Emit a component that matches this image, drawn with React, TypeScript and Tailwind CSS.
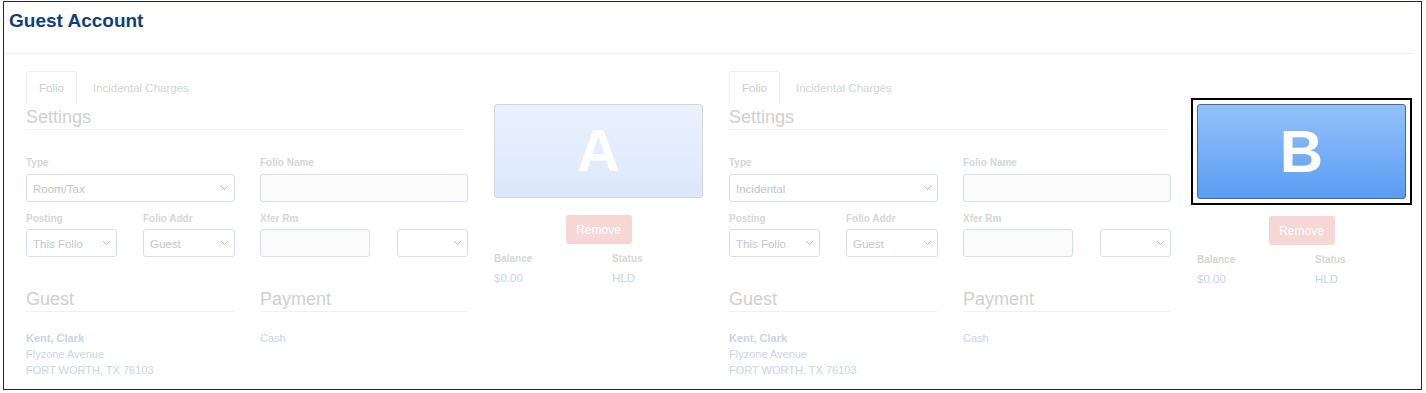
const font = { fontFamily: '"Liberation Sans", Arial, sans-serif' };

function Chevron() {
  return (
    <svg width="9" height="6" viewBox="0 0 9 6" fill="none" className="shrink-0">
      <path d="M1 1l3.5 3.5L8 1" stroke="#b8bcc2" strokeWidth="1" />
    </svg>
  );
}

function Select({ value, className }: { value?: string; className: string }) {
  return (
    <div
      className={`flex h-[28px] items-center justify-between rounded-[3px] border border-[#d3dff0] bg-white pl-[6px] pr-[5px] text-[11.5px] text-[#c4c6ca] ${className}`}
    >
      <span className="pt-[3px]">{value}</span>
      <Chevron />
    </div>
  );
}

function Input({ className }: { className: string }) {
  return <div className={`h-[28px] rounded-[3px] border border-[#d3dff0] bg-[#fbfbfc] ${className}`} />;
}

function Label({ children }: { children: React.ReactNode }) {
  return <div className="h-[12px] text-[10px] leading-[12px] font-bold text-[#d6d6d6]">{children}</div>;
}

function Folio({ type, letter, selected }: { type: string; letter: string; selected?: boolean }) {
  return (
    <div className="flex">
      <div className="w-[442px]">
        <div className="flex h-[35px] items-start">
          <div className="flex h-[33px] items-center rounded-t-[3px] border border-b-0 border-[#eeeeee] px-[12px] pt-[2px] text-[11.5px] text-[#cdcdcd]">
            Folio
          </div>
          <div className="ml-[4px] flex h-[33px] items-center px-[12px] pt-[2px] text-[11.5px] text-[#d4d4d4]">
            Incidental Charges
          </div>
        </div>
        <div className="mr-[3px] h-[24px] border-b border-[#f1f1f1] text-[18px] leading-[22px] text-[#d0d0d0]">
          Settings
        </div>

        <div className="mt-[27px] flex gap-[25px]">
          <div className="w-[209px]">
            <Label>Type</Label>
            <Select value={type} className="mt-[5px] w-full" />
          </div>
          <div className="w-[208px]">
            <Label>Folio Name</Label>
            <Input className="mt-[5px] w-full" />
          </div>
        </div>

        <div className="mt-[11px] flex">
          <div className="w-[91px]">
            <Label>Posting</Label>
            <Select value="This Folio" className="mt-[4px] w-full" />
          </div>
          <div className="ml-[26px] w-[92px]">
            <Label>Folio Addr</Label>
            <Select value="Guest" className="mt-[4px] w-full" />
          </div>
          <div className="ml-[25px] w-[110px]">
            <Label>Xfer Rm</Label>
            <Input className="mt-[4px] w-full" />
          </div>
          <div className="ml-[27px] w-[71px] pt-[16px]">
            <Select className="w-full" />
          </div>
        </div>

        <div className="mt-[31px] flex gap-[26px]">
          <div className="w-[208px]">
            <div className="h-[24px] border-b border-[#f1f1f1] text-[18px] leading-[22px] text-[#d0d0d0]">Guest</div>
            <div className="mt-[18px] text-[11px] leading-[16px] text-[#c9d5e7]">
              <div className="font-bold">Kent, Clark</div>
              <div>Flyzone Avenue</div>
              <div>FORT WORTH, TX 76103</div>
            </div>
          </div>
          <div className="w-[208px]">
            <div className="h-[24px] border-b border-[#f1f1f1] text-[18px] leading-[22px] text-[#d0d0d0]">Payment</div>
            <div className="mt-[18px] text-[11px] leading-[16px] text-[#c9d5e7]">Cash</div>
          </div>
        </div>
      </div>

      <div className="ml-[26px] w-[209px]">
        {selected ? (
          <div className="mt-[27px] -mx-[6px] border-2 border-black p-[4px]">
            <div className="flex h-[95px] items-center justify-center rounded-[3px] border border-[#4f6688] bg-gradient-to-b from-[#94c1f9] to-[#5a9cf3] text-[60px] leading-none font-bold text-white">
              {letter}
            </div>
          </div>
        ) : (
          <div className="mt-[33px] flex h-[94px] items-center justify-center rounded-[3px] border border-[#d3d8de] bg-gradient-to-b from-[#e9f1fc] to-[#dce8fb] text-[60px] leading-none font-bold text-white">
            {letter}
          </div>
        )}
        <div className={`${selected ? "mt-[11px]" : "mt-[17px]"} flex justify-center`}>
          <div className="flex h-[29px] w-[66px] items-center justify-center rounded-[3px] bg-[#f7d7d5] text-[12px] text-white">
            Remove
          </div>
        </div>
        <div className="mt-[9px] grid grid-cols-[118px_1fr]">
          <div className="h-[12px] text-[10px] leading-[12px] font-bold text-[#d6d6d6]">Balance</div>
          <div className="h-[12px] text-[10px] leading-[12px] font-bold text-[#d6d6d6]">Status</div>
          <div className="mt-[5px] text-[11.5px] leading-[16px] text-[#c9d5e7]">$0.00</div>
          <div className="mt-[5px] text-[11.5px] leading-[16px] text-[#c9d5e7]">HLD</div>
        </div>
      </div>
    </div>
  );
}

export default function App() {
  return (
    <div className="h-[393px] w-[1426px] bg-white pt-[1px] pl-[3px]" style={font}>
      <div className="h-[389px] w-[1419px] border border-[#1c2541]">
        <div className="mr-[6px] h-[52px] border-b border-[#f0f0f0] pt-[8px] pl-[5px] text-[19px] leading-[22px] font-bold text-[#0f3f7c]">
          Guest Account
        </div>
        <div className="flex gap-[26px] pt-[17px] pl-[22px]">
          <Folio type="Room/Tax" letter="A" />
          <Folio type="Incidental" letter="B" selected />
        </div>
      </div>
    </div>
  );
}
